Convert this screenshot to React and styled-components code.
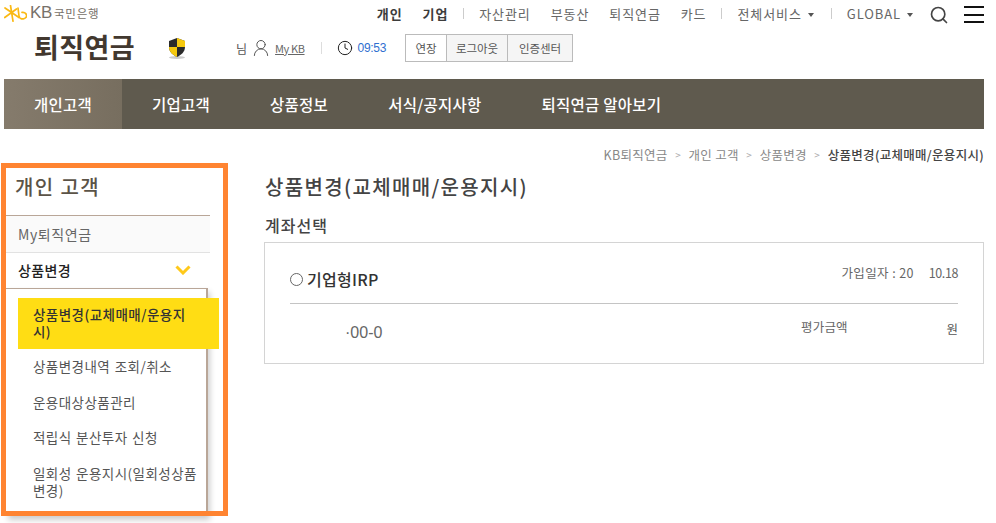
import styled, { createGlobalStyle } from 'styled-components';
import { Search, UserRound, Clock } from 'lucide-react';

const FONT = '"Noto Sans CJK KR", "Noto Sans", "Liberation Sans", sans-serif';

const GlobalStyle = createGlobalStyle`
  html, body {
    margin: 0;
    padding: 0;
    background: #fff;
    font-family: ${FONT};
    color: #444;
  }
  * { box-sizing: border-box; }
`;

const Page = styled.div`
  position: relative;
  width: 996px;
  height: 523px;
  padding: 0 12px 0 4px;
  overflow: hidden;
`;

const TopRow = styled.div`
  display: flex;
  align-items: center;
  justify-content: space-between;
  height: 26px;
`;

const Logo = styled.div`
  display: flex;
  align-items: center;
  gap: 3px;
  height: 16px;
  color: #77716a;
`;

const LogoKb = styled.span`
  font-family: "Liberation Sans", sans-serif;
  font-size: 17px;
  letter-spacing: -0.3px;
`;

const LogoBank = styled.span`
  margin-left: -1px;
  font-size: 11.5px;
  letter-spacing: 0.7px;
`;

const UtilNav = styled.div`
  display: flex;
  align-items: center;
  font-size: 13px;
  color: #666;
`;

const UtilLink = styled.span`
  margin-left: ${(p) => p.$gap ?? 20}px;
  font-weight: ${(p) => (p.$bold ? 700 : 400)};
  color: ${(p) => (p.$bold ? '#3c3c3c' : '#666')};
  letter-spacing: 0.9px;
  white-space: nowrap;
`;

const Divider = styled.i`
  display: block;
  width: 1px;
  height: 11px;
  margin-left: ${(p) => p.$gap ?? 15}px;
  background: #ccc;
`;

const Caret = styled.i`
  display: inline-block;
  width: 0;
  height: 0;
  margin-left: 6px;
  vertical-align: 2px;
  border-left: 3.5px solid transparent;
  border-right: 3.5px solid transparent;
  border-top: 4px solid #555;
`;

const IconBtn = styled.span`
  display: flex;
  margin-left: 16px;
  margin-top: 3px;
  color: #444;
`;

const Burger = styled.span`
  display: flex;
  flex-direction: column;
  gap: 5.5px;
  width: 20px;
  margin-left: 15px;
  margin-top: 3px;

  i {
    display: block;
    height: 2px;
    background: #111;
  }
`;

const InfoRow = styled.div`
  display: flex;
  align-items: center;
  height: 38px;
  margin-top: 3px;
  padding-left: 30px;
`;

const SiteTitle = styled.h1`
  width: 133px;
  margin: -2px 0 0;
  font-size: 27px;
  line-height: 38px;
  font-weight: 700;
  letter-spacing: 0.4px;
  color: #42382f;
`;

const UserBox = styled.div`
  display: flex;
  align-items: center;
  margin-left: 49px;
  font-size: 12px;
  color: #555;
`;

const UserIcon = styled(UserRound)`
  margin-left: 4px;
`;

const MyKb = styled.span`
  margin-left: 4px;
  font-size: 11px;
  letter-spacing: -0.4px;
  text-decoration: underline;
  color: #666;
`;

const Sep = styled.i`
  display: block;
  width: 1px;
  height: 12px;
  margin: 0 15px 0 16px;
  background: #ddd;
`;

const Timer = styled.span`
  margin-left: 5px;
  font-family: "Liberation Sans", sans-serif;
  font-size: 12px;
  letter-spacing: -0.3px;
  color: #2f6fd0;
`;

const BtnGroup = styled.div`
  display: flex;
  margin-left: 20px;
`;

const SmallBtn = styled.span`
  display: flex;
  align-items: center;
  justify-content: center;
  width: ${(p) => p.$w}px;
  height: 28px;
  margin-left: -1px;
  border: 1px solid #bbb;
  background: ${(p) => (p.$plain ? '#fff' : '#f5f5f5')};
  font-size: 11.5px;
  color: #555;
`;

const MainNav = styled.nav`
  display: flex;
  width: 980px;
  height: 50px;
  margin-top: 12px;
  background: #5f5a4e;
`;

const NavItem = styled.a`
  display: flex;
  align-items: center;
  padding: 0 30px;
  font-size: 15.5px;
  font-weight: 500;
  letter-spacing: 0.25px;
  color: #fff;
  background: ${(p) => (p.$active ? 'linear-gradient(90deg, #857b6c, #776e5f)' : 'none')};
`;

const Crumbs = styled.div`
  display: flex;
  justify-content: flex-end;
  align-items: center;
  width: 980px;
  height: 16px;
  margin-top: 17px;
  font-size: 12.5px;
  letter-spacing: 0.3px;
  color: #888;
`;

const CrumbArrow = styled.span`
  margin: 0 7.5px;
  font-size: 10px;
  color: #aaa;
`;

const CrumbNow = styled.strong`
  font-weight: 500;
  color: #444;
`;

const Body = styled.div`
  display: flex;
  width: 980px;
`;

const Sidebar = styled.aside`
  width: 204px;
  margin-left: 2px;
  margin-top: -8px;
  flex-shrink: 0;
`;

const SideTitle = styled.h2`
  height: 62px;
  margin: 0;
  padding: 20px 0 0 9px;
  font-size: 20px;
  line-height: 26px;
  font-weight: 500;
  letter-spacing: 1.4px;
  color: #5b5347;
  border-bottom: 1px solid #b9a698;
`;

const SideRow = styled.div`
  display: flex;
  align-items: center;
  justify-content: space-between;
  height: ${(p) => p.$h}px;
  padding: 0 19px ${(p) => (p.$open ? 2 : 0)}px 12px;
  font-size: 14px;
  letter-spacing: ${(p) => (p.$open ? 0.4 : 0.6)}px;
  font-weight: ${(p) => (p.$open ? 500 : 400)};
  color: ${(p) => (p.$open ? '#222' : '#666')};
  background: ${(p) => (p.$open ? '#fff' : '#fafafa')};
  border-bottom: ${(p) => (p.$open ? 'none' : '1px solid #e2e2e2')};
`;

const SubMenu = styled.div`
  position: relative;
  width: 202px;
  height: 228px;
  padding-top: 9px;
  border-top: 1px solid #b9a698;
  border-right: 2px solid #b9a698;
  box-shadow: 2px 4px 6px rgba(0, 0, 0, 0.2);
  background: #fff;
`;

const SubItem = styled.div`
  display: flex;
  align-items: center;
  position: relative;
  height: ${(p) => p.$h}px;
  width: ${(p) => (p.$active ? 201 : 190)}px;
  margin-left: 12px;
  padding: 0 ${(p) => (p.$active ? 30 : 5)}px 2px 15px;
  font-size: 13.5px;
  line-height: 17px;
  letter-spacing: 0.45px;
  word-spacing: 1px;
  color: ${(p) => (p.$active ? '#333' : '#555')};
  font-weight: ${(p) => (p.$active ? 500 : 400)};
  background: ${(p) => (p.$active ? '#ffdd14' : 'transparent')};
`;

const Content = styled.main`
  flex: 1;
  margin-left: 54px;
  margin-top: 7px;
`;

const PageTitle = styled.h2`
  margin: 0;
  height: 36px;
  padding: 5px 0 0 1px;
  font-size: 20px;
  line-height: 26px;
  font-weight: 500;
  letter-spacing: 1.35px;
  color: #444;
`;

const SectionTitle = styled.h3`
  margin: 9px 0 6px;
  padding-left: 1px;
  font-size: 16px;
  line-height: 22px;
  font-weight: 500;
  letter-spacing: 1px;
  color: #444;
`;

const Card = styled.section`
  width: 720px;
  height: 122px;
  padding: 0 25px;
  border: 1px solid #d4d4d4;
`;

const CardHead = styled.div`
  display: flex;
  justify-content: space-between;
  height: 61px;
  border-bottom: 1px solid #c4c4c4;
`;

const AccountType = styled.label`
  display: flex;
  align-items: center;
  gap: 4px;
  margin-top: 21px;
  height: 30px;
  font-size: 16px;
  font-weight: 500;
  letter-spacing: 0.3px;
  color: #333;
`;

const Radio = styled.i`
  display: block;
  width: 13px;
  height: 13px;
  border: 1px solid #666;
  border-radius: 50%;
`;

const JoinDate = styled.span`
  margin-top: 20px;
  font-size: 12.5px;
  line-height: 20px;
  letter-spacing: 0.4px;
  color: #666;
  white-space: pre;
`;

const JoinDay = styled.span`
  margin-left: 2px;
  letter-spacing: -0.4px;
`;

const CardBody = styled.div`
  display: flex;
  align-items: flex-start;
`;

const AccountNo = styled.span`
  width: 511px;
  padding: 19px 0 0 55px;
  font-family: "Liberation Sans", sans-serif;
  font-size: 16px;
  line-height: 20px;
  color: #666;
`;

const EvalLabel = styled.span`
  margin-top: 14px;
  font-size: 12.5px;
  line-height: 18px;
  letter-spacing: 0.2px;
  color: #666;
`;

const EvalUnit = styled.span`
  margin-left: auto;
  margin-top: 16px;
  font-size: 12.5px;
  line-height: 18px;
  color: #555;
`;

const Highlight = styled.div`
  position: absolute;
  left: 1px;
  top: 163px;
  width: 227px;
  height: 353px;
  border: 5px solid #ff8431;
  pointer-events: none;
`;

const KbMark = () => (
  <svg width="23" height="17" viewBox="0 0 23 17" fill="none">
    <path d="M6.5 .5 L9 16.2 M1 3 L15 12.5 M.7 12.5 L12.5 4" stroke="#fab914" strokeWidth="1.7" strokeLinecap="round" />
    <path d="M14 3 L15 11 a3.8 3.3 0 1 0 3 -3.6" stroke="#fab914" strokeWidth="1.7" strokeLinecap="round" />
  </svg>
);

const ShieldIcon = () => (
  <svg width="20" height="22" viewBox="0 0 20 22">
    <ellipse cx="10" cy="20.5" rx="8" ry="1.5" fill="#ccc" />
    <path d="M10 1 L18 4 V10 C18 15 14 18 10 20 C6 18 2 15 2 10 V4 Z" fill="#2b2b2b" />
    <path d="M10 1 L18 4 V10 H10 Z M10 10 H2 C2 15 6 18 10 20 Z" fill="#f6c90e" />
  </svg>
);

const Chevron = () => (
  <svg width="16" height="10" viewBox="0 0 16 10" fill="none">
    <path d="M1.5 1.5 L8 8 L14.5 1.5" stroke="#ffc91a" strokeWidth="3" />
  </svg>
);

export default function App() {
  return (
    <>
      <GlobalStyle />
      <Page>
        <TopRow>
          <Logo>
            <KbMark />
            <LogoKb>KB</LogoKb>
            <LogoBank>국민은행</LogoBank>
          </Logo>
          <UtilNav>
            <UtilLink $bold>개인</UtilLink>
            <UtilLink $bold>기업</UtilLink>
            <Divider />
            <UtilLink $gap={15}>자산관리</UtilLink>
            <UtilLink>부동산</UtilLink>
            <UtilLink>퇴직연금</UtilLink>
            <UtilLink>카드</UtilLink>
            <Divider />
            <UtilLink $gap={15}>전체서비스<Caret /></UtilLink>
            <Divider $gap={17} />
            <UtilLink $gap={15}>GLOBAL<Caret /></UtilLink>
            <IconBtn><Search size={20} strokeWidth={2} /></IconBtn>
            <Burger><i /><i /><i /></Burger>
          </UtilNav>
        </TopRow>
        <InfoRow>
          <SiteTitle>퇴직연금</SiteTitle>
          <ShieldIcon />
          <UserBox>
            <span>님</span>
            <UserIcon size={20} strokeWidth={1.2} />
            <MyKb>My KB</MyKb>
            <Sep />
            <Clock size={16} strokeWidth={1.5} color="#222" />
            <Timer>09:53</Timer>
          </UserBox>
          <BtnGroup>
            <SmallBtn $w={42} $plain>연장</SmallBtn>
            <SmallBtn $w={62}>로그아웃</SmallBtn>
            <SmallBtn $w={66}>인증센터</SmallBtn>
          </BtnGroup>
        </InfoRow>
        <MainNav>
          <NavItem $active>개인고객</NavItem>
          <NavItem>기업고객</NavItem>
          <NavItem>상품정보</NavItem>
          <NavItem>서식/공지사항</NavItem>
          <NavItem>퇴직연금 알아보기</NavItem>
        </MainNav>
        <Crumbs>
          <span>KB퇴직연금</span><CrumbArrow>&gt;</CrumbArrow>
          <span>개인 고객</span><CrumbArrow>&gt;</CrumbArrow>
          <span>상품변경</span><CrumbArrow>&gt;</CrumbArrow>
          <CrumbNow>상품변경(교체매매/운용지시)</CrumbNow>
        </Crumbs>
        <Body>
          <Sidebar>
            <SideTitle>개인 고객</SideTitle>
            <SideRow $h={37}>My퇴직연금</SideRow>
            <SideRow $h={35} $open>상품변경<Chevron /></SideRow>
            <SubMenu>
              <SubItem $active $h={51}>상품변경(교체매매/운용지시)</SubItem>
              <SubItem $h={36}>상품변경내역 조회/취소</SubItem>
              <SubItem $h={36}>운용대상상품관리</SubItem>
              <SubItem $h={35}>적립식 분산투자 신청</SubItem>
              <SubItem $h={53}>일회성 운용지시(일회성상품변경)</SubItem>
            </SubMenu>
          </Sidebar>
          <Content>
            <PageTitle>상품변경(교체매매/운용지시)</PageTitle>
            <SectionTitle>계좌선택</SectionTitle>
            <Card>
              <CardHead>
                <AccountType><Radio />기업형IRP</AccountType>
                <JoinDate>가입일자 : 20    <JoinDay>10.18</JoinDay></JoinDate>
              </CardHead>
              <CardBody>
                <AccountNo>·00-0</AccountNo>
                <EvalLabel>평가금액</EvalLabel>
                <EvalUnit>원</EvalUnit>
              </CardBody>
            </Card>
          </Content>
        </Body>
        <Highlight />
      </Page>
    </>
  );
}
